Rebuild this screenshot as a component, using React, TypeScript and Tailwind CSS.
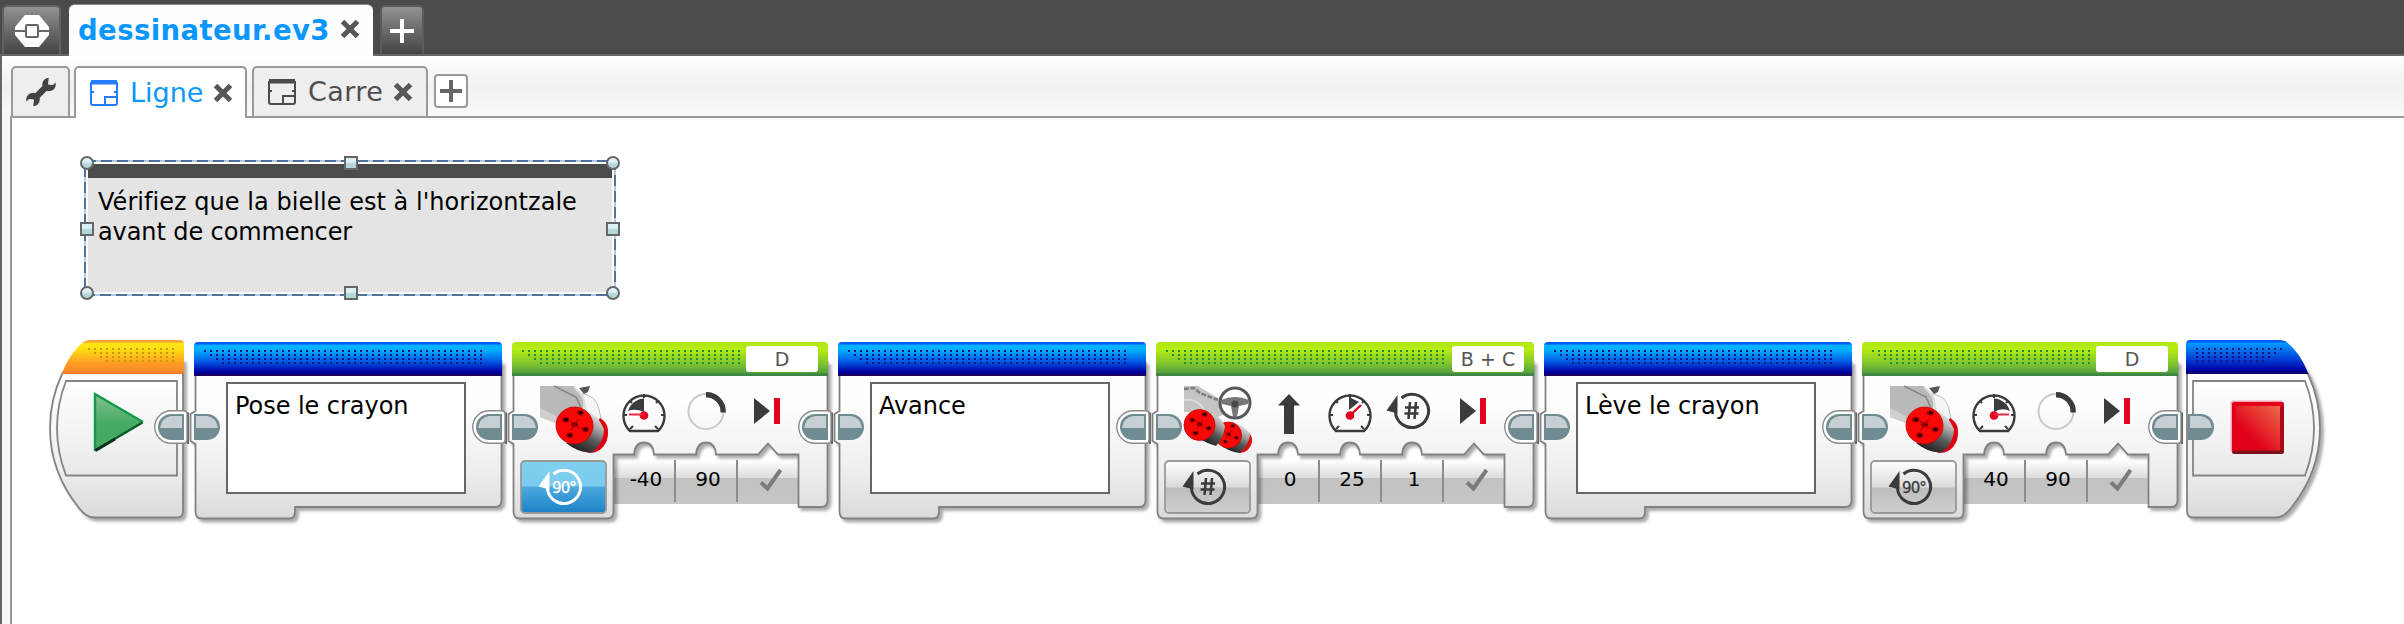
import React from "react";

const FONT = "font-['DejaVu_Sans',sans-serif]";

function Defs() {
  return (
    <svg className="absolute h-0 w-0" aria-hidden="true">
      <defs>
        <linearGradient id="body" x1="0" y1="0" x2="0" y2="1">
          <stop offset="0" stopColor="#ffffff" />
          <stop offset="0.25" stopColor="#fefefe" />
          <stop offset="0.7" stopColor="#eeeeee" />
          <stop offset="1" stopColor="#dadada" />
        </linearGradient>
        <linearGradient id="panel" x1="0" y1="0" x2="0" y2="1">
          <stop offset="0" stopColor="#ffffff" />
          <stop offset="1" stopColor="#e9e9e9" />
        </linearGradient>
        <linearGradient id="blue" x1="0" y1="0" x2="0" y2="1">
          <stop offset="0" stopColor="#0058ff" />
          <stop offset="0.06" stopColor="#0060ff" />
          <stop offset="0.1" stopColor="#00b4ff" />
          <stop offset="0.25" stopColor="#00acff" />
          <stop offset="0.6" stopColor="#0052e0" />
          <stop offset="0.85" stopColor="#0008aa" />
          <stop offset="0.93" stopColor="#000090" />
          <stop offset="0.95" stopColor="#1c0060" />
          <stop offset="1" stopColor="#1c0060" />
        </linearGradient>
        <linearGradient id="stopBlue" x1="0" y1="0" x2="0" y2="1">
          <stop offset="0" stopColor="#0058ff" />
          <stop offset="0.06" stopColor="#0060ff" />
          <stop offset="0.1" stopColor="#0098ff" />
          <stop offset="0.6" stopColor="#0038d0" />
          <stop offset="0.9" stopColor="#0000a0" />
          <stop offset="1" stopColor="#1c0060" />
        </linearGradient>
        <linearGradient id="green" x1="0" y1="0" x2="0" y2="1">
          <stop offset="0" stopColor="#b0e612" />
          <stop offset="0.2" stopColor="#b6ec10" />
          <stop offset="0.6" stopColor="#84c82c" />
          <stop offset="0.9" stopColor="#55a23e" />
          <stop offset="0.94" stopColor="#3f8440" />
          <stop offset="1" stopColor="#3f8440" />
        </linearGradient>
        <linearGradient id="orange" x1="0" y1="0" x2="0" y2="1">
          <stop offset="0" stopColor="#f7a53a" />
          <stop offset="0.06" stopColor="#f9a83a" />
          <stop offset="0.1" stopColor="#ffe414" />
          <stop offset="0.25" stopColor="#ffe010" />
          <stop offset="0.7" stopColor="#ff9a24" />
          <stop offset="0.9" stopColor="#fa8c26" />
          <stop offset="1" stopColor="#e8792c" />
        </linearGradient>
        <linearGradient id="param" x1="0" y1="0" x2="0" y2="1">
          <stop offset="0" stopColor="#ffffff" />
          <stop offset="0.28" stopColor="#ffffff" />
          <stop offset="0.57" stopColor="#dcdcdc" />
          <stop offset="0.58" stopColor="#c2c2c2" />
          <stop offset="1" stopColor="#c6c6c6" />
        </linearGradient>
        <linearGradient id="modeBlue" x1="0" y1="0" x2="0" y2="1">
          <stop offset="0" stopColor="#80cff0" />
          <stop offset="0.48" stopColor="#7acbee" />
          <stop offset="0.5" stopColor="#4ea8de" />
          <stop offset="1" stopColor="#1b82c6" />
        </linearGradient>
        <linearGradient id="modeGray" x1="0" y1="0" x2="0" y2="1">
          <stop offset="0" stopColor="#ffffff" />
          <stop offset="0.5" stopColor="#dadada" />
          <stop offset="0.52" stopColor="#bdbdbd" />
          <stop offset="1" stopColor="#cfcfcf" />
        </linearGradient>
        <linearGradient id="cyl" x1="0.8" y1="0" x2="0.3" y2="1">
          <stop offset="0" stopColor="#f4f4f4" />
          <stop offset="0.3" stopColor="#b4b4b4" />
          <stop offset="0.6" stopColor="#5a5a5a" />
          <stop offset="1" stopColor="#1c1c1c" />
        </linearGradient>
        <linearGradient id="play" x1="0" y1="0" x2="0" y2="1">
          <stop offset="0" stopColor="#85c292" />
          <stop offset="0.5" stopColor="#48ab64" />
          <stop offset="1" stopColor="#44a860" />
        </linearGradient>
        <linearGradient id="stopRed" x1="1" y1="0" x2="0.3" y2="0.7">
          <stop offset="0" stopColor="#ec6a48" />
          <stop offset="1" stopColor="#e1001a" />
        </linearGradient>
      </defs>
    </svg>
  );
}

/* ---------- shared block artwork ---------- */

function Dots({ color, rows }: { color: string; rows: [number, number, number][] }) {
  return (
    <g fill={color} shapeRendering="crispEdges">
      {rows.map(([y, from, to]) => {
        const items: React.ReactNode[] = [];
        for (let x = from; x <= to; x += 6) items.push(<rect key={x} x={x} y={y} width="2" height="2" />);
        return <g key={y}>{items}</g>;
      })}
    </g>
  );
}

function PlugIn({ y, x = 0 }: { y: number; x?: number }) {
  return (
    <g transform={`translate(${x} ${y})`}>
      <path d="M0 0H13A13 13 0 0 1 13 26H0Z" fill="#708c92" />
      <path d="M2 2H13Q22 3 24 14H2Z" fill="#c5cfd4" />
    </g>
  );
}

function PlugOut({ x, y }: { x: number; y: number }) {
  return (
    <g transform={`translate(${x} ${y})`}>
      <path d="M4 -1.500V30" stroke="#666" strokeWidth="2" />
      <path d="M-10 -3.200H0Q3 -3.200 3 0V26Q3 29.200 0 29.200H-13A16.200 16.200 0 0 1 -13 -3.200Z" fill="#fff" stroke="#8b8b8b" strokeWidth="1.400" />
      <path d="M0 0H-13A13 13 0 0 0 -13 26H0Z" fill="#708c92" />
      <path d="M-2 2H-13Q-22 3 -24 14H-2Z" fill="#c5cfd4" />
    </g>
  );
}

const SHADOW = "drop-shadow-[3px_3px_1.5px_rgba(0,0,0,0.33)]";
const LEFT = "V69 L-3.5 72 V99 L1.5 102";

function BlockHead({ w, fill }: { w: number; fill: string }) {
  return <path d={`M0 34V4Q0 0 4 0H${w - 4}Q${w} 0 ${w} 4V34Z`} fill={`url(#${fill})`} />;
}

/* ---------- blocks ---------- */

function StartBlock() {
  return (
    <div className="relative h-[178px] w-[134px]">
      <svg className="absolute inset-0 overflow-visible" width="134" height="178">
        <g className={SHADOW}>
          <path
            d="M133 20V171Q133 177.500 127 177.500H44Q36 177.500 29 168Q0 132 0 88Q0 60 12 34L30 12Z"
            fill="url(#body)"
            stroke="#828282"
            strokeWidth="1.800"
          />
        </g>
        <path d="M11.500 34Q20 12 34 1.500Q37 0 40 0H130Q134 0 134 4V34Z" fill="url(#orange)" />
        <Dots color="#c79a00" rows={[[8, 38, 124], [12, 44, 124], [16, 50, 124], [20, 56, 124]]} />
        <path d="M17 41H127V135.500H16Q7 112 7 88Q7 64 16 41Z" fill="url(#panel)" stroke="#848484" strokeWidth="1.800" />
        <path d="M45 54L92.500 82L45 110Z" fill="url(#play)" />
        <path d="M45 111V54L93 82" fill="none" stroke="#12994a" strokeWidth="2.400" />
        <path d="M45 110.500L92.500 82.500" fill="none" stroke="#0b5a2a" strokeWidth="2.400" />
        <path d="M45.500 110.500L65 99" fill="none" stroke="#06331b" strokeWidth="3" />
        <PlugOut x={134} y={74} />
      </svg>
    </div>
  );
}

function StopBlock() {
  return (
    <div className="relative -ml-0.5 h-[178px] w-[135px]">
      <svg className="absolute inset-0 overflow-visible" width="135" height="178">
        <g className={SHADOW}>
          <path
            d="M1 20V171Q1 177.500 7 177.500H90Q98 177.500 105 168Q134 132 134 88Q134 60 122 34L104 12Z"
            fill="url(#body)"
            stroke="#828282"
            strokeWidth="1.800"
          />
        </g>
        <path d="M122.500 34Q114 12 100 1.500Q97 0 94 0H4Q0 0 0 4V34Z" fill="url(#stopBlue)" />
        <Dots color="#15157a" rows={[[8, 10, 94], [12, 10, 88], [16, 10, 82], [20, 10, 76]]} />
        <path d="M7 41H119Q128 64 128 88Q128 112 119 135.500H7Z" fill="url(#panel)" stroke="#848484" strokeWidth="1.800" />
        <rect x="44.500" y="60.500" width="53" height="52" rx="3" fill="#f3a9b4" />
        <rect x="46" y="62" width="52" height="52" rx="2.500" fill="#7c1119" />
        <path d="M48.500 62H95.500L98 64V104L94 110H50L46 112V64Z" fill="#e1001a" />
        <path d="M98 65V112L94 108V68Z" fill="#a80a18" />
        <rect x="49.500" y="66" width="44.500" height="44.500" fill="url(#stopRed)" />
        <PlugIn x={2} y={74} />
      </svg>
    </div>
  );
}

function CommentBlock({ text }: { text: string }) {
  return (
    <div className="relative mt-0.5 h-[178px] w-[308px]">
      <svg className="absolute inset-0 overflow-visible" width="308" height="178">
        <g className={SHADOW}>
          <path
            d={`M1.500 20${LEFT}V170Q1.500 176.500 8 176.500H95Q101 176.500 101 170V165H301Q307.500 165 307.500 158V20Z`}
            fill="url(#body)"
            stroke="#828282"
            strokeWidth="1.800"
          />
        </g>
        <BlockHead w={308} fill="blue" />
        <Dots color="#15157a" rows={[[8, 10, 286], [12, 16, 286], [16, 22, 286], [20, 28, 286]]} />
        <PlugIn y={72} />
        <PlugOut x={308} y={72} />
      </svg>
      <div className="relative flex h-full pl-8 pt-10">
        <div className="h-28 w-60 border-2 border-[#666] bg-white pl-[7px] pt-2 text-[24px] leading-[29px] tracking-[-0.05px] text-black">{text}</div>
      </div>
    </div>
  );
}

function Gauge({ side }: { side: "left" | "right" | "up" }) {
  return (
    <svg className="overflow-visible" width="44" height="40" viewBox="-22 -21 44 40">
      {side === "left" && <path d="M0 -2V-15.500L-4 -15Q-13 -12 -16 -3Q-9 -6 0 -2Z" fill="#3b3b3d" />}
      {side === "right" && <path d="M0 -2V-15.500L4 -15Q13 -12 16 -3Q8 -7 0 -2Z" fill="#3b3b3d" />}
      {side === "up" && <path d="M-1 -4V-17L9 -12Z" fill="#3b3b3d" />}
      <path d="M-14 17A20.500 20.500 0 1 1 14 17Z" fill="none" stroke="#3b3b3d" strokeWidth="2.400" strokeLinejoin="round" />
      <path d="M0 -20V-16M-20 1H-17M20 1H17M-14 -13L-12 -11M14 -13L12 -11M-14 15L-11 12M14 15L11 12" stroke="#3b3b3d" strokeWidth="2" />
      <circle cx="0" cy="1.500" r="4.300" fill="#e4001f" />
      {side === "left" && <path d="M-15 0.500H0" stroke="#e8293f" strokeWidth="2" />}
      {side === "right" && <path d="M15 0.500H0" stroke="#e8293f" strokeWidth="2" />}
      {side === "up" && <path d="M11 -9L0 1.500" stroke="#e4001f" strokeWidth="2.400" />}
    </svg>
  );
}

function Degrees() {
  return (
    <svg className="overflow-visible" width="44" height="40" viewBox="-22 -21 44 40">
      <circle cx="0" cy="-2.500" r="17.500" fill="none" stroke="#c6cac8" strokeWidth="2" />
      <path d="M0 -19.200A17 17 0 0 1 17.200 -1.500" fill="none" stroke="#3b3b3d" strokeWidth="5.400" />
    </svg>
  );
}

function Brake() {
  return (
    <svg className="overflow-visible" width="44" height="40" viewBox="-22 -21 44 40">
      <path d="M-14 -16L2 -3L-14 10Z" fill="#3b3b3d" />
      <rect x="6" y="-16" width="6" height="26" fill="#e4001f" />
    </svg>
  );
}

function Arrow() {
  return (
    <svg className="overflow-visible" width="44" height="40" viewBox="-22 -21 44 40">
      <path d="M1 -20L12 -8.500H6V20H-4V-8.500H-10Z" fill="#3b3b3d" />
    </svg>
  );
}

function TurnGlyph({ label, color }: { label: string; color: string }) {
  const hash = label === "#";
  return (
    <svg className="overflow-visible" width="44" height="40" viewBox="-22 -20 44 40">
      <path d="M-10.500 -13A16.600 16.600 0 1 1 -16.600 0.500" fill="none" stroke={color} strokeWidth="3" />
      <path d="M-25.500 -0.500L-14.500 -16V2.500Z" fill={color} />
      {hash ? (
        <path d="M-2 -9L-3.500 8M4 -9L2.500 8M-7 -3.500H7M-7.500 2.500H6.500" stroke={color} strokeWidth="2.500" fill="none" />
      ) : (
        <text x="0" y="5.500" textAnchor="middle" fontSize="15" letterSpacing="-0.900" fill={color} stroke={color} strokeWidth="0.300">
          {label}
        </text>
      )}
    </svg>
  );
}

const HOLES = [[0, -1], [6, -13], [-9, -6], [11, 4], [-5, 10]];

function Face({ cx, cy, r }: { cx: number; cy: number; r: number }) {
  const k = r / 19;
  return (
    <g>
      <circle cx={cx} cy={cy} r={r} fill="#f80806" stroke="#c40000" strokeWidth="0.800" />
      {HOLES.map(([x, y], i) => (
        <g key={i}>
          <ellipse cx={cx + x * k} cy={cy + y * k} rx={3.800 * k} ry={2.900 * k} fill="#b00000" />
          <ellipse cx={cx + (x + 0.500) * k} cy={cy + y * k} rx={2.200 * k} ry={1.800 * k} fill="#300000" />
        </g>
      ))}
      <path
        d={`M${cx - 5 * k} ${cy - 5 * k}L${cx + 5 * k} ${cy + 3 * k}M${cx + 4 * k} ${cy - 6 * k}L${cx - 4 * k} ${cy + 5 * k}`}
        stroke="#b00000"
        strokeWidth={1.200 * k}
      />
    </g>
  );
}

function MediumMotor() {
  return (
    <svg className="overflow-visible" width="68" height="68">
      <path d="M36 6L44 8L50 10Q58 14 60 28L64 44L44 34Z" fill="#f4f4f4" stroke="#bdbdbd" strokeWidth="1" />
      <path d="M0 0H34L44 14L43 24Q24 22 16 37L0 31Z" fill="#b9b9b9" />
      <path d="M0 22L16 30L16 37L0 31Z" fill="#cfcfcf" />
      <path d="M14 0L36 11L41 22" fill="none" stroke="#868686" strokeWidth="1.600" />
      <path d="M34 1L43 10L46 26" fill="none" stroke="#dedede" strokeWidth="2" />
      <path d="M39 2L50 0L48 6L44 8Z" fill="#555" />
      <path d="M60 32Q71 38 67 54Q62 67 49 67L40 64Z" fill="#e00010" />
      <path d="M43 24Q58 28 64 43Q64 56 53 66Q40 68 26 57L44 52Z" fill="url(#cyl)" />
      <Face cx={34.500} cy={39.500} r={18.500} />
    </svg>
  );
}

function DriveMotors() {
  return (
    <svg className="overflow-visible" width="68" height="68">
      <path d="M0 0H14L34 12L40 28L28 34L4 26H0Z" fill="#c4c4c4" />
      <path d="M0 3L10 2L16 7L34 14" fill="none" stroke="#808080" strokeWidth="2.600" strokeDasharray="5 1.500" />
      <path d="M0 14Q14 12 20 24" fill="none" stroke="#dadada" strokeWidth="2" />
      <path d="M58 44Q69 46 68 56Q66 66 56 67L46 62Z" fill="#dc1010" />
      <path d="M48 36Q62 40 66 49Q64 60 56 67Q46 66 38 60Z" fill="url(#cyl)" />
      <Face cx={44.500} cy={49} r={13} />
      <path d="M20 24Q36 28 41 40Q40 52 32 60Q24 58 16 53Z" fill="url(#cyl)" />
      <Face cx={15.500} cy={39} r={15.500} />
      <circle cx="51" cy="17" r="15" fill="#fff" stroke="#58585a" strokeWidth="3" />
      <path d="M37 14Q51 8 65 14L64 18L55 20L53 31H49L47 20L38 18Z" fill="#77777a" />
      <circle cx="51" cy="18" r="3.500" fill="#4a4a4c" />
    </svg>
  );
}

function Check() {
  return (
    <svg width="26" height="26" viewBox="0 0 26 26">
      <path d="M3 15.500L9.500 21.500L22.500 3" fill="none" stroke="#7b7b7b" strokeWidth="4" />
    </svg>
  );
}

type ActionProps = {
  w: number;
  port: string;
  art: React.ReactNode;
  icons: React.ReactNode[];
  values: string[];
  mode: string;
  active?: boolean;
};

function ActionBlock({ w, port, art, icons, values, mode, active }: ActionProps) {
  const lastDot = w - 90;
  const bumps = values.map((_, i) => {
    const c = 132 + i * 62;
    return `H${c - 10}Q${c - 9} 100.500 ${c} 100.500T${c + 10} 112.500`;
  });
  return (
    <div className="relative mt-0.5 h-[178px]" style={{ width: w }}>
      <svg className="absolute inset-0 overflow-visible" width={w} height="178">
        <rect x="101" y="101" width={w - 131} height="61" fill="url(#param)" />
        <g className={SHADOW}>
          <path
            d={`M1.500 20${LEFT}V170Q1.500 176.500 8 176.500H95Q101.500 176.500 101.500 170V112.500${bumps.join("")}H${w - 70}L${w - 60} 101.500L${w - 50} 112.500H${w - 29.5}V165H${w - 7}Q${w - 0.5} 165 ${w - 0.5} 158V20Z`}
            fill="url(#body)"
            stroke="#828282"
            strokeWidth="1.800"
          />
        </g>
        <BlockHead w={w} fill="green" />
        <Dots color="#1f8f3a" rows={[[8, 10, lastDot], [12, 16, lastDot], [16, 22, lastDot], [20, 28, lastDot]]} />
        <rect x="9" y="119" width="85" height="52" rx="4" fill={active ? "url(#modeBlue)" : "url(#modeGray)"} stroke="#999" strokeWidth="1.800" />
        <PlugIn y={72} />
        <PlugOut x={w} y={72} />
      </svg>
      <div className="relative flex h-full flex-col">
        <div className="flex h-[34px] justify-end pr-2.5 pt-1">
          <div className="flex h-[26px] w-[72px] items-center justify-center rounded-[3px] bg-white text-[19px] text-[#555]">{port}</div>
        </div>
        <div className="flex h-[84px] pl-7 pt-2.5">
          <div className="w-[82px]">{art}</div>
          <div className="flex gap-[18px] pt-[7px]">
            {icons.map((icon, i) => (
              <div key={i} className="h-10 w-11">
                {icon}
              </div>
            ))}
          </div>
        </div>
        <div className="flex">
          <div className="flex h-[54px] w-[102px] items-center justify-center pl-[2px]">
            <TurnGlyph label={mode} color={active ? "#ffffff" : "#3b3b3d"} />
          </div>
          {values.map((v, i) => (
            <div key={i} className="flex h-[42px] w-[62px] items-center justify-center border-r-2 border-[#8c8c8c] pb-1 pl-1 text-[20px] text-black">
              {v}
            </div>
          ))}
          <div className="flex h-[42px] w-[62px] items-center justify-center pb-0.5 pl-1">
            <Check />
          </div>
        </div>
      </div>
    </div>
  );
}

/* ---------- selected note ---------- */

function Handle({ round, className }: { round?: boolean; className: string }) {
  return (
    <span
      className={
        (round ? "rounded-full " : "") +
        "absolute h-3.5 w-3.5 border-2 border-[#666] bg-linear-to-b from-[#dcf0f3] from-40% to-[#b3d6db] to-60% " +
        className
      }
    />
  );
}

function Note() {
  return (
    <div className="absolute left-[85px] top-[161px] h-[134px] w-[531px] pl-[3px] pt-[3px]">
      <svg className="absolute inset-0 overflow-visible" width="531" height="134">
        <rect x="0" y="0" width="530" height="134" fill="none" stroke="#b7c8d8" strokeWidth="2" />
        <rect x="0" y="0" width="530" height="134" fill="none" stroke="#4d759c" strokeWidth="2" strokeDasharray="11 5" />
      </svg>
      <div className="relative h-[128px] w-[524px] border-t-[14px] border-[#4b4b4b] bg-[#e4e4e4] pl-2.5 pt-[9px] text-[24px] leading-[30px] tracking-[0.04px] text-black">
        Vérifiez que la bielle est à l'horizontzale
        <br />
        <span className="tracking-[-0.1px]">avant de commencer</span>
      </div>
      <Handle round className="-left-[5px] -top-[5px]" />
      <Handle className="left-[259px] -top-[5px]" />
      <Handle round className="left-[521px] -top-[5px]" />
      <Handle className="-left-[5px] top-[61px]" />
      <Handle className="left-[521px] top-[61px]" />
      <Handle round className="-left-[5px] top-[125px]" />
      <Handle className="left-[259px] top-[125px]" />
      <Handle round className="left-[521px] top-[125px]" />
    </div>
  );
}

/* ---------- tabs ---------- */

function Cross() {
  return (
    <svg width="20" height="20" viewBox="0 0 20 20">
      <path d="M2.500 2.500L17.500 17.500M17.500 2.500L2.500 17.500" stroke="#575757" strokeWidth="5" />
    </svg>
  );
}

function SheetIcon({ color }: { color: string }) {
  return (
    <svg width="28" height="26" viewBox="0 0 28 26" fill="none" stroke={color} strokeWidth="2">
      <path d="M14 25H3Q1 25 1 23V3H27V23Q27 25 25 25H15V17H27" />
      <path d="M1 0H27V4.500H1Z" fill={color} stroke="none" />
      <path d="M1 12H4M24 12H27" />
    </svg>
  );
}

function ProjectBar() {
  return (
    <div className="flex h-14 items-end border-b-2 border-[#666] bg-[#4b4b4b] pl-0.5">
      <div className="flex h-[49px] w-[59px] items-center justify-center rounded-t-[5px] border-2 border-b-0 border-[#626262] bg-linear-to-b from-[#929292] to-[#454545]">
        <svg width="34" height="32" viewBox="0 0 34 32">
          <path d="M10 0H24L34 12V20L24 32H10L0 20V12Z" fill="#fff" />
          <path d="M0 16H11M23 16H34" stroke="#666" strokeWidth="2" />
          <rect x="11" y="10" width="12" height="12" rx="1" fill="#fff" stroke="#666" strokeWidth="2" />
        </svg>
      </div>
      <div className="relative mb-[-2px] ml-2 flex h-[52px] w-[304px] items-center rounded-t-[6px] border-t border-[#888] bg-[#fdfdfd] pl-[9px]">
        <span className="w-[262px] whitespace-nowrap text-[27.500px] font-bold tracking-[0.4px] text-[#0a97ff]">dessinateur.ev3</span>
        <span className="pb-1">
          <Cross />
        </span>
      </div>
      <div className="ml-[7px] flex h-[49px] w-[44px] items-center justify-center rounded-t-[5px] border-2 border-b-0 border-[#5c5c5c] bg-linear-to-b from-[#929292] to-[#454545]">
        <svg width="24" height="24" viewBox="0 0 24 24">
          <path d="M12 0V24M0 12H24" stroke="#fff" strokeWidth="4" />
        </svg>
      </div>
    </div>
  );
}

function ProgramTab({ name, active }: { name: string; active?: boolean }) {
  return (
    <div
      className={
        active
          ? "relative flex h-[52px] w-[173px] items-center rounded-t-[5px] border-2 border-b-0 border-[#999] bg-white pl-3.5 text-[#0a97ff]"
          : "ml-[5px] flex h-[52px] w-[176px] items-center rounded-t-[5px] border-2 border-[#999] bg-[#eeeeee] pl-3.5 text-[#4d4d4d]"
      }
    >
      <SheetIcon color={active ? "#247dff" : "#4b4b4b"} />
      <span className={active ? "w-[95px] pl-3 text-[27px]" : "w-[97px] pl-3 text-[27px] tracking-[0.4px]"}>{name}</span>
      <Cross />
    </div>
  );
}

function ProgramBar() {
  return (
    <div className="flex h-[62px] bg-linear-to-b from-white from-0% via-[#f0f0f0] via-50% to-[#fafafa] pl-[9px] pt-2.5">
      <div className="flex h-[52px] w-[59px] items-center justify-center rounded-t-[5px] border-2 border-[#999] bg-[#eeeeee]">
        <svg width="32" height="32" viewBox="0 0 32 32">
          <path d="M6 26L26 6" stroke="#444" strokeWidth="6.500" />
          <circle cx="24" cy="8.500" r="6.800" fill="#444" />
          <circle cx="8" cy="23.500" r="6.800" fill="#444" />
          <path d="M23 8.500L24 -1L34 -1L33 4L28 9Z" fill="#eee" />
          <path d="M9 23.500L8 33L-2 33L-1 28L4 23Z" fill="#eee" />
        </svg>
      </div>
      <div className="ml-1 flex">
        <ProgramTab name="Ligne" active />
        <ProgramTab name="Carre" />
      </div>
      <div className="ml-1.5 mt-[8px] flex h-[34px] w-[34px] items-center justify-center rounded-[4px] border-2 border-[#999] bg-white">
        <svg width="22" height="22" viewBox="0 0 22 22">
          <path d="M11 0V22M0 11H22" stroke="#666" strokeWidth="4" />
        </svg>
      </div>
    </div>
  );
}

/* ---------- page ---------- */

export default function App() {
  return (
    <div className={"relative flex h-[624px] w-[2404px] flex-col overflow-hidden bg-white " + FONT}>
      <Defs />
      <ProjectBar />
      <div className="flex flex-1 flex-col border-l-2 border-[#666]">
        <ProgramBar />
        <div className="flex flex-1 bg-[#f8f8f8] pl-2">
          <div className="-mt-0.5 flex-1 border-l-2 border-t-2 border-[#999] bg-white pl-[38px] pt-[222px]">
            <div className="flex gap-2.5">
              <StartBlock />
              <CommentBlock text="Pose le crayon" />
              <ActionBlock
                w={316}
                port="D"
                art={<MediumMotor />}
                icons={[<Gauge side="left" />, <Degrees />, <Brake />]}
                values={["-40", "90"]}
                mode="90°"
                active
              />
              <CommentBlock text="Avance" />
              <ActionBlock
                w={378}
                port="B + C"
                art={<DriveMotors />}
                icons={[
                  <Arrow />,
                  <Gauge side="up" />,
                  <div className="-mt-0.5">
                    <TurnGlyph label="#" color="#3b3b3d" />
                  </div>,
                  <Brake />,
                ]}
                values={["0", "25", "1"]}
                mode="#"
              />
              <CommentBlock text="Lève le crayon" />
              <ActionBlock
                w={316}
                port="D"
                art={<MediumMotor />}
                icons={[<Gauge side="right" />, <Degrees />, <Brake />]}
                values={["40", "90"]}
                mode="90°"
              />
              <StopBlock />
            </div>
          </div>
        </div>
      </div>
      <Note />
    </div>
  );
}
